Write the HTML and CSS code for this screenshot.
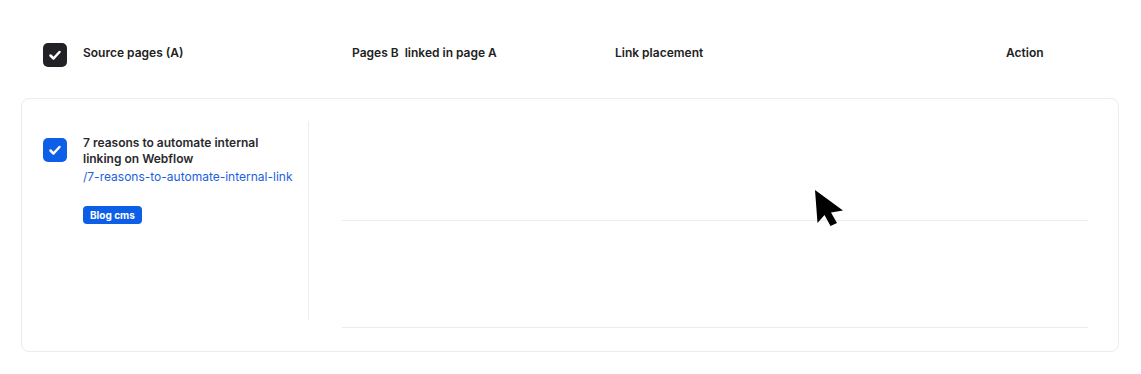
FILE: index.html
```html
<!DOCTYPE html>
<html>
<head>
<meta charset="utf-8">
<link rel="stylesheet" href="styles.css">
</head>
<body>
<div class="page">
  <div class="head">
    <span class="cb cb-dark">
      <svg viewBox="0 0 24 24" width="24" height="24"><path d="M7.5 12.5 L10.5 15.5 L16.5 9" fill="none" stroke="#fff" stroke-width="2.5" stroke-linecap="round" stroke-linejoin="round"/></svg>
    </span>
    <div class="hc hc1">Source pages (A)</div>
    <div class="hc hc2">Pages B&nbsp; linked in page A</div>
    <div class="hc hc3">Link placement</div>
    <div class="hc hc4">Action</div>
  </div>
  <div class="card">
    <div class="src">
      <span class="cb cb-blue">
        <svg viewBox="0 0 24 24" width="24" height="24"><path d="M7.5 12.5 L10.5 15.5 L16.5 9" fill="none" stroke="#fff" stroke-width="2.5" stroke-linecap="round" stroke-linejoin="round"/></svg>
      </span>
      <div class="info">
        <div class="title">7 reasons to automate internal linking on Webflow</div>
        <div class="slug">/7-reasons-to-automate-internal-link</div>
        <span class="badge">Blog cms</span>
      </div>
    </div>
    <div class="rows">
      <div class="row r1"></div>
      <div class="row r2"></div>
    </div>
  </div>
  <svg class="cursor" width="32" height="40" viewBox="0 0 32 40"><polygon points="1,1 3.5,34 10.5,26 16.5,37 23,34 17,23.5 29,21.5" fill="#000"/></svg>
</div>
</body>
</html>
```
FILE: styles.css
```css
* { box-sizing: border-box; }
body {
  margin: 0;
  background: #fff;
  font-family: Inter, "Noto Sans", sans-serif;
  color: #222;
}
.page {
  position: relative;
  width: 1141px;
  height: 374px;
  padding: 43px 22px 0 21px;
}
.head {
  display: flex;
  align-items: flex-start;
  padding-left: 22px;
  height: 24px;
}
.cb {
  display: block;
  width: 24px;
  height: 24px;
  border-radius: 5px;
  flex: none;
}
.cb svg { display: block; }
.cb-dark { background: #222226; }
.cb-blue { background: #0d5fe8; margin-top: 4px; }
.hc {
  font-size: 12px;
  font-weight: 600;
  line-height: 16px;
  padding-top: 2px;
  color: #222;
}
.hc1 { margin-left: 16px; width: 269px; }
.hc2 { width: 263px; }
.hc3 { width: 391px; }
.hc4 { flex: 1; }
.card {
  margin-top: 31px;
  border: 1px solid #ececec;
  border-radius: 8px;
  height: 254px;
  padding: 22px 30px 0 21px;
  display: flex;
  align-items: flex-start;
}
.src {
  width: 266px;
  height: 199px;
  border-right: 1px solid #ededed;
  padding-top: 13px;
  display: flex;
  align-items: flex-start;
}
.info {
  margin-left: 16px;
  width: 215px;
  padding-top: 1px;
}
.title {
  font-size: 12px;
  font-weight: 600;
  line-height: 16px;
  color: #2a2a2e;
}
.slug {
  margin-top: 2px;
  font-size: 12px;
  line-height: 16px;
  color: #1d5fe0;
  white-space: nowrap;
}
.badge {
  display: inline-block;
  margin-top: 21px;
  height: 18px;
  line-height: 18px;
  padding: 0 7px;
  border-radius: 4px;
  background: #0d5fe8;
  color: #fff;
  font-size: 10px;
  font-weight: 700;
}
.rows {
  flex: 1;
  margin-left: 33px;
}
.row { border-bottom: 1px solid #ececec; }
.r1 { height: 100px; }
.r2 { height: 107px; }
.cursor {
  position: absolute;
  left: 814px;
  top: 189px;
}
```
